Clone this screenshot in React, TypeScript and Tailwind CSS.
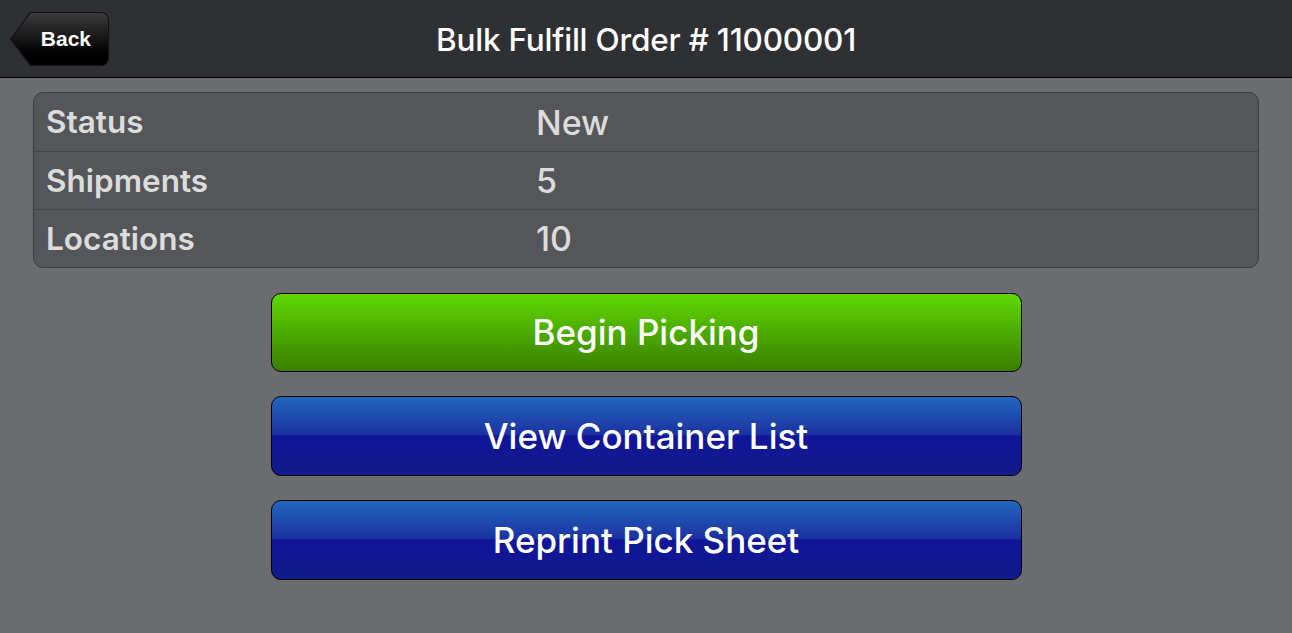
const rows = [
  { label: 'Status', value: 'New' },
  { label: 'Shipments', value: '5' },
  { label: 'Locations', value: '10' },
];

const App = () => {
  return (
    <div className="min-h-screen w-full bg-[#6b6c70] font-['Inter','Noto_Sans',sans-serif]">
      {/* Header */}
      <header className="relative h-[78px] bg-[#2f3033] border-b border-black flex items-center justify-center">
        <button className="absolute left-[10px] top-[12px] h-[54px] w-[99px] bg-[#111] [clip-path:polygon(20px_0,100%_0,100%_100%,20px_100%,0_50%)] rounded-r-[8px]">
          <span className="absolute inset-[1px] bg-gradient-to-b from-[#3b3b3b] via-[#161616] via-50% to-black [clip-path:polygon(20px_0,100%_0,100%_100%,20px_100%,0_50%)] rounded-r-[7px] flex items-center justify-end pr-[17px] text-white text-[21px] font-bold font-['Liberation_Sans',Arial,sans-serif]">
            Back
          </span>
        </button>
        <h1 className="pt-[3px] text-white text-[31.5px] font-medium tracking-[-0.2px]">Bulk Fulfill Order # 11000001</h1>
      </header>

      {/* Summary table */}
      <div className="px-[33px] pt-[14px]">
        <div className="rounded-[10px] border border-[#3a3b3e] bg-[#555659] overflow-hidden">
          {rows.map((r, i) => (
            <div
              key={r.label}
              className={`grid grid-cols-[490px_1fr] h-[58px] items-center ${i > 0 ? 'border-t border-[#45464a]' : ''}`}
            >
              <div className="pl-[12px] text-[31.5px] font-semibold text-[#dcdcdc]">{r.label}</div>
              <div className="pl-[12px] text-[34px] font-medium text-[#dcdcdc]">{r.value}</div>
            </div>
          ))}
        </div>
      </div>

      {/* Actions */}
      <div className="flex flex-col items-center gap-[24px] pt-[25px]">
        <button className="w-[751px] h-[79px] rounded-[10px] border border-black bg-gradient-to-b from-[#60d800] to-[#3a7f00] text-white text-[35px] font-medium">
          Begin Picking
        </button>
        <button className="w-[751px] h-[80px] rounded-[10px] border border-black bg-[linear-gradient(to_bottom,#2267bc_0%,#1b32a2_48%,#11159a_50%,#121b8a_100%)] text-white text-[35px] font-medium">
          View Container List
        </button>
        <button className="w-[751px] h-[80px] rounded-[10px] border border-black bg-[linear-gradient(to_bottom,#2267bc_0%,#1b32a2_48%,#11159a_50%,#121b8a_100%)] text-white text-[35px] font-medium">
          Reprint Pick Sheet
        </button>
      </div>
    </div>
  );
};

export default App;
